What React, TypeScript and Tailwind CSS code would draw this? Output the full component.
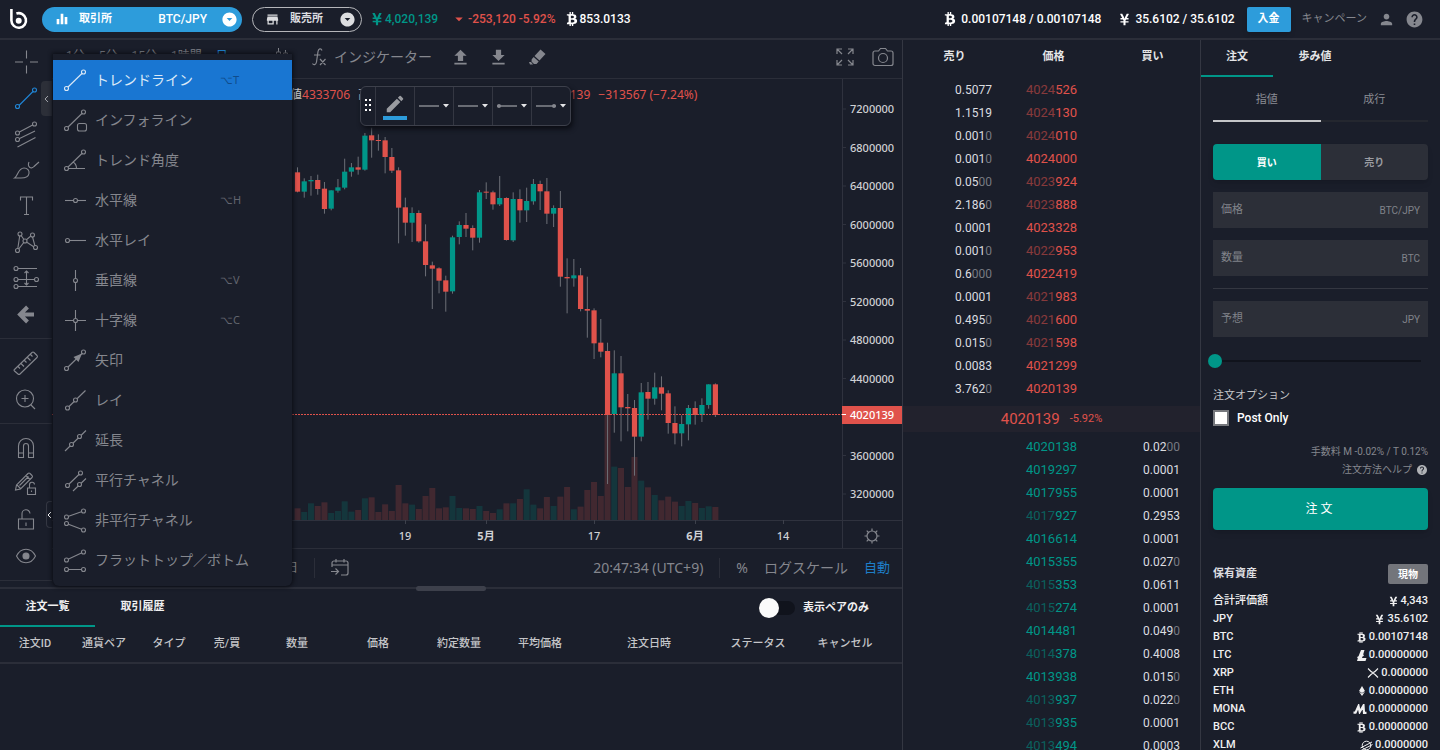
import React, { useState } from "react";
import {
  MdArrowDropDown,
  MdArrowDropDownCircle,
  MdDownload,
  MdEdit,
  MdEqualizer,
  MdHelp,
  MdPerson,
  MdStore,
  MdUpload,
} from "react-icons/md";
import { FaBtc, FaEthereum, FaYenSign } from "react-icons/fa";

type Pt = [number, number];

// line drawing icon, dots are the little handles on the line ends
function LineIcon({ d, dots = [], fill, children }: { d: string; dots?: Pt[]; fill?: string; children?: React.ReactNode }) {
  return (
    <svg width="28" height="28" viewBox="0 0 28 28" fill="none" stroke="currentColor" strokeWidth="1.1" className="shrink-0">
      <path d={d} />
      {fill && <path d={fill} fill="currentColor" stroke="none" />}
      {dots.map(([x, y], i) => (
        <circle key={i} cx={x} cy={y} r="2" className="fill-[#1a1e2a] group-first:fill-[#1976d2]" />
      ))}
      {children}
    </svg>
  );
}

const tools = [
  [
    { name: "十字カーソル", icon: <LineIcon d="M14.5 2.5v8M14.5 17.500v8M3 14h8M18 14h8" /> },
    {
      name: "トレンドライン",
      active: true,
      icon: <LineIcon d="M7 21.500L21 7.500"><circle cx="5.500" cy="22.500" r="2" /><circle cx="22.500" cy="6" r="2" /></LineIcon>,
    },
    { name: "フィボナッチ", icon: <LineIcon d="M5.500 13L22.500 4M5.500 19.500L23 11M5.500 27L23.500 17.500" dots={[[5.5, 13], [22.5, 4], [5.5, 19.5]]} /> },
    { name: "ブラシ", icon: <LineIcon d="M2.700 22C6 20 6 12 12 12c3.500 0 5.500 2.500 5 5.500C16.500 21 13 22 9 22zM17 6c-2 4.500 2 8 5 4.500L27 6" /> },
    { name: "テキスト", icon: <LineIcon d="M8.500 8.500V5h12v3.500M14.500 5v17M12 22.500h5" /> },
    { name: "パターン", icon: <LineIcon d="M5.500 22.500L8 6l5 7 7-6 3.500 13L13 13z" dots={[[8, 6], [20.5, 7], [5.5, 22.5], [23.5, 19.5], [13, 13]]} /> },
    { name: "ポジション", icon: <LineIcon d="M4 4.500h21M4 15.500h20M4 22.500h21M14.500 7v14M12.500 9l2-2 2 2M12.500 19l2 2 2-2" dots={[[4, 4.5], [4, 15.5], [24.5, 15.5], [4, 22.5]]} /> },
    { name: "戻る", icon: <svg width="28" height="28" viewBox="0 0 28 28" fill="none" stroke="currentColor" strokeWidth="4"><path d="M22 14.500H9M15.500 7l-7.500 7.500 7.500 7.500" /></svg> },
  ],
  [
    { name: "定規", icon: <LineIcon d="M2.500 20.500L20 3.500q1-1 2 0l3 3q1 1 0 2L8 25q-1 1-2 0l-3.500-3q-1-.8 0-1.500zM6 17.500l2 2M9 14.500l3 3M12.500 11.500l2 2M15.500 8.500l3 3M18.500 5.500l2 2" /> },
    { name: "拡大", icon: <LineIcon d="M19 20l4 4M9.500 13.500h7M13 10v7"><circle cx="13" cy="13.500" r="8.500" /></LineIcon> },
  ],
  [
    { name: "マグネット", icon: <LineIcon d="M6.500 23.500V12a7.500 7.500 0 0 1 15 0v11.500h-5V12a2.500 2.500 0 0 0-5 0v11.500zM6.500 19h5M16.500 19h5" /> },
    { name: "描画ロック", icon: <LineIcon d="M3.500 20l1-5L16 3.500q1-1 2 0l2 2q1 1 0 2L8.500 19zM14 5.500l4 4M5 15l3.500 3.500M7.500 15.500l9-9M15.500 18h8v6.500h-8zM17.500 18v-3a2.500 2.500 0 0 1 5-.5M19.500 20.500v1.500" /> },
    { name: "ロック", icon: <LineIcon d="M6.500 13h15v10h-15zM10 13V8a4 4 0 0 1 8-.5M14 16.500v3.500" /> },
    { name: "表示", icon: <LineIcon d="M4.500 14C9 5 19 5 23.500 14 19 23 9 23 4.500 14z"><circle cx="14" cy="14" r="3" fill="currentColor" /></LineIcon> },
  ],
];

const lineTools = [
  { name: "トレンドライン", key: "⌥T", icon: <LineIcon d="M5.500 22.500L22.500 6" dots={[[5.5, 22.5], [22.5, 6]]} /> },
  { name: "インフォライン", key: "", icon: <LineIcon d="M5.500 22.500L22.500 6" dots={[[5.5, 22.5], [22.5, 6]]}><rect x="16.500" y="17.500" width="9" height="7.500" rx="2" className="fill-[#1a1e2a]" /></LineIcon> },
  { name: "トレンド角度", key: "", icon: <LineIcon d="M24 22.500H5.500L22.500 6M12 16q3.500 2 3.500 6.500" dots={[[5.5, 22.5], [22.5, 6]]} /> },
  { name: "水平線", key: "⌥H", icon: <LineIcon d="M4 14.500h21" dots={[[14.5, 14.5]]} /> },
  { name: "水平レイ", key: "", icon: <LineIcon d="M6 14.500h19" dots={[[6.5, 14.5]]} /> },
  { name: "垂直線", key: "⌥V", icon: <LineIcon d="M14.500 4v21" dots={[[14.5, 14.5]]} /> },
  { name: "十字線", key: "⌥C", icon: <LineIcon d="M4 14.500h21M14.500 4v21" dots={[[14.5, 14.5]]} /> },
  { name: "矢印", key: "", icon: <LineIcon d="M5.500 22.500L22.500 6" fill="M21 7.500l-8.500 3.500 5 5z" dots={[[5.5, 22.5], [22.5, 6]]} /> },
  { name: "レイ", key: "", icon: <LineIcon d="M6.500 22L24.500 4.500" dots={[[6.5, 22], [14.5, 14]]} /> },
  { name: "延長", key: "", icon: <LineIcon d="M4 25L25 4.500" dots={[[10.5, 18.5], [18.5, 10.5]]} /> },
  { name: "平行チャネル", key: "", icon: <LineIcon d="M6.500 19.500L19.500 7M12 25L25 12.500" dots={[[6.5, 19.5], [19.5, 7], [18.5, 18.5]]} /> },
  { name: "非平行チャネル", key: "", icon: <LineIcon d="M5.500 11L22.500 5M5.500 17.500L22.500 24" dots={[[5.5, 11], [22.5, 5], [5.5, 17.5], [22.5, 24]]} /> },
  { name: "フラットトップ／ボトム", key: "", icon: <LineIcon d="M5.500 14L22.500 6M5.500 23.500h17" dots={[[5.5, 14], [22.5, 6], [5.5, 23.5], [22.5, 23.5]]} /> },
];

// high, body top, body bottom, low, up, volume (3 units per px, y from 80)
const candles = [
  [262, 277, 335, 337, 0, 35], [295, 304, 335, 353, 1, 24], [288, 300, 304, 347, 1, 50], [284, 300, 327, 344, 0, 42],
  [306, 326, 387, 401, 0, 53], [331, 331, 386, 391, 1, 21], [297, 322, 332, 338, 1, 27], [236, 275, 323, 328, 1, 56],
  [249, 262, 275, 290, 1, 25], [230, 262, 269, 284, 0, 30], [159, 167, 269, 272, 1, 65], [143, 166, 181, 233, 0, 68],
  [163, 180, 183, 212, 0, 24], [171, 181, 231, 280, 0, 47], [204, 231, 272, 279, 0, 27], [262, 271, 383, 490, 0, 105],
  [353, 382, 428, 467, 0, 50], [382, 399, 428, 486, 1, 46], [391, 399, 484, 488, 0, 33], [433, 484, 555, 589, 0, 72],
  [545, 556, 566, 687, 0, 96], [562, 565, 602, 640, 0, 35], [587, 601, 635, 695, 0, 38], [467, 472, 634, 641, 1, 72],
  [424, 435, 471, 493, 1, 36], [399, 435, 446, 471, 0, 35], [436, 444, 473, 511, 0, 33], [330, 337, 473, 488, 1, 42],
  [307, 335, 338, 357, 0, 27], [332, 337, 373, 389, 0, 21], [288, 354, 373, 378, 1, 32], [352, 354, 480, 482, 0, 50],
  [337, 357, 481, 486, 1, 50], [328, 357, 391, 428, 0, 63], [323, 363, 391, 426, 1, 92], [297, 312, 364, 374, 1, 46],
  [302, 312, 334, 390, 0, 35], [294, 334, 401, 432, 0, 69], [376, 384, 401, 441, 1, 42], [333, 384, 590, 620, 0, 70],
  [535, 591, 595, 700, 0, 99], [537, 586, 595, 620, 1, 32], [564, 586, 687, 694, 0, 40], [590, 687, 692, 773, 0, 90],
  [685, 691, 790, 837, 0, 114], [717, 788, 815, 832, 0, 72], [788, 813, 1005, 1212, 0, 315], [811, 880, 1002, 1058, 1, 160],
  [828, 880, 982, 1084, 0, 156], [942, 981, 985, 1054, 0, 99], [960, 984, 1070, 1187, 0, 189], [909, 937, 1070, 1084, 1, 118],
  [906, 936, 956, 1019, 0, 98], [878, 922, 956, 974, 1, 75], [889, 922, 941, 991, 0, 59], [931, 940, 1029, 1061, 0, 70],
  [979, 1029, 1060, 1093, 0, 55], [1006, 1032, 1060, 1099, 1, 42], [975, 984, 1033, 1081, 1, 57], [964, 984, 1005, 1034, 0, 51],
  [955, 975, 1005, 1026, 1, 36], [913, 913, 975, 986, 1, 41], [910, 913, 1005, 1011, 0, 39],
];
const prices = [7200000, 6800000, 6400000, 6000000, 5600000, 5200000, 4800000, 4400000, 4000000, 3600000, 3200000];
const dates: [number, string][] = [[353, "19"], [434, "5月"], [542, "17"], [643, "6月"], [731, "14"]];

function Chart() {
  return (
    <svg viewBox="0 0 850 469" preserveAspectRatio="xMaxYMin slice" className="h-full w-full font-['Noto_Sans','Noto_Sans_CJK_JP',sans-serif]">
      <g stroke="#2f323e">
        <path d="M790.5 0V469M0 441.500H850" />
      </g>
      {candles.map(([hi, top, bot, lo, up, vol], i) => {
        const x = 245.5 + i * 6.74;
        const color = up ? "#009688" : "#e0524b";
        return (
          <g key={i}>
            <rect x={x - 3} y={441 - vol / 3} width="6" height={vol / 3} fill={color} opacity="0.2" />
            <rect x={x - 0.5} y={1 + hi / 3} width="1" height={(lo - hi) / 3} fill="#6c6f77" />
            <rect x={x - 2.6} y={1 + top / 3} width="5.200" height={(bot - top) / 3} fill={color} />
          </g>
        );
      })}
      <path d="M0 335.500H790" stroke="#e0524b" strokeDasharray="2 1" />
      <g fill="#d0d1d4" fontSize="11" fontWeight="500">
        {prices.map((p, i) => (
          <g key={p}>
            <path d={`M790 ${30 + i * 38.5}h4`} stroke="#2f323e" />
            {p !== 4000000 && <text x="798" y={34 + i * 38.5}>{p}</text>}
          </g>
        ))}
        {dates.map(([x, label]) => (
          <g key={label}>
            <path d={`M${x}.500 441v4`} stroke="#3d404b" />
            <text x={x} y="461" textAnchor="middle" fontWeight={label.includes("月") ? 700 : 500}>{label}</text>
          </g>
        ))}
      </g>
      <rect x="790" y="327" width="60" height="18" fill="#e0524b" />
      <path d="M790 335.500h4" stroke="#fff" />
      <text x="798" y="340" fontSize="11" fontWeight="500" fill="#fff">4020139</text>
    </svg>
  );
}

const asks = [
  ["0.5077", "4024526"], ["1.1519", "4024130"], ["0.0010", "4024010"], ["0.0010", "4024000"], ["0.0500", "4023924"],
  ["2.1860", "4023888"], ["0.0001", "4023328"], ["0.0010", "4022953"], ["0.6000", "4022419"], ["0.0001", "4021983"],
  ["0.4950", "4021600"], ["0.0150", "4021598"], ["0.0083", "4021299"], ["3.7620", "4020139"],
];
const bids = [
  ["0.0200", "4020138"], ["0.0001", "4019297"], ["0.0001", "4017955"], ["0.2953", "4017927"], ["0.0001", "4016614"],
  ["0.0270", "4015355"], ["0.0611", "4015353"], ["0.0001", "4015274"], ["0.0490", "4014481"], ["0.4008", "4014378"],
  ["0.0150", "4013938"], ["0.0220", "4013937"], ["0.0001", "4013935"], ["0.0003", "4013494"],
];

function Amount({ value }: { value: string }) {
  const head = value.replace(/0+$/, "");
  return <>{head}<span className="text-[#777a82]">{value.slice(head.length)}</span></>;
}

// thousands repeated from the neighbouring row are dimmed
function Price({ value, near }: { value: string; near?: string }) {
  const n = near && near.slice(0, 4) === value.slice(0, 4) ? 4 : 0;
  return <><span className="opacity-55">{value.slice(0, n)}</span>{value.slice(n)}</>;
}

function OrderBook() {
  return (
    <section className="w-[298px] shrink-0 overflow-hidden border-r border-[#343742]">
      <table className="w-full table-fixed text-xs">
        <thead>
          <tr className="h-[38px] align-top text-[11px] leading-[34px] text-[#e4e5e7]">
            <th className="p-0 pl-1 font-bold">売り</th>
            <th className="p-0 pl-1 font-bold">価格</th>
            <th className="p-0 pl-1 font-bold">買い</th>
          </tr>
        </thead>
        <tbody>
          {asks.map(([amount, price], i) => (
            <tr key={price} className="h-[23px]">
              <td className="p-0 pr-[10px] text-right text-[#dcdde0]"><Amount value={amount} /></td>
              <td className="p-0 text-center text-[13px] text-[#e0524b]"><Price value={price} near={asks[i + 1]?.[1]} /></td>
              <td />
            </tr>
          ))}
        </tbody>
      </table>
      <div className="mt-[6px] mb-[3px] flex h-[26px] items-center justify-center gap-[10px] bg-[#22222d] text-[15px] text-[#e0524b]">
        4020139 <span className="text-[11px]">-5.92%</span>
      </div>
      <table className="w-full table-fixed text-xs">
        <tbody>
          {bids.map(([amount, price], i) => (
            <tr key={price} className="h-[23px]">
              <td />
              <td className="p-0 text-center text-[13px] text-[#009688]"><Price value={price} near={bids[i - 1]?.[1]} /></td>
              <td className="p-0 pr-5 text-right text-[#dcdde0]"><Amount value={amount} /></td>
            </tr>
          ))}
        </tbody>
      </table>
    </section>
  );
}

function Field({ label, unit }: { label: string; unit: string }) {
  return (
    <label className="flex h-9 items-center bg-[#2c2f38] px-2 text-[11px] text-[#80838a]">
      <span className="shrink-0">{label}</span>
      <input type="text" className="h-full min-w-0 flex-1 bg-transparent px-2 text-right outline-none" />
      <span className="text-[10px]">{unit}</span>
    </label>
  );
}

const balances = [
  { name: "合計評価額", icon: <FaYenSign size={11} />, value: "4,343" },
  { name: "JPY", icon: <FaYenSign size={11} />, value: "35.6102" },
  { name: "BTC", icon: <FaBtc size={11} />, value: "0.00107148" },
  { name: "LTC", icon: <svg width="10" height="11" viewBox="0 0 10 11" fill="currentColor"><path d="M4 0h3.500L6 5l1-.4-.4 1.500-1.100.5L5 8h4.500L8.500 11H0l1-3.200-1 .4.500-1.500 1-.5z" /></svg>, value: "0.00000000" },
  { name: "XRP", icon: <svg width="12" height="10" viewBox="0 0 12 10" fill="none" stroke="currentColor" strokeWidth="1.100"><path d="M1 .5l3 3q2 2 4 0l3-3M1 9.500l3-3q2-2 4 0l3 3" /></svg>, value: "0.000000" },
  { name: "ETH", icon: <FaEthereum size={10} />, value: "0.00000000" },
  { name: "MONA", icon: <svg width="14" height="10" viewBox="0 0 14 10" fill="none" stroke="currentColor" strokeWidth="2.200"><path d="M.5 8.700h2L5.500 2l1.200 6L10.500 1.500 11 8.800h2.500" /></svg>, value: "0.00000000" },
  { name: "BCC", icon: <FaBtc size={11} />, value: "0.00000000" },
  { name: "XLM", icon: <svg width="13" height="11" viewBox="0 0 13 11" fill="none" stroke="currentColor"><circle cx="6.500" cy="5.500" r="4.300" /><path d="M.5 8L12 2M1 10.500L12.500 4.500" /></svg>, value: "0.0000000" },
];

function OrderPanel() {
  const [side, setSide] = useState("buy");
  return (
    <aside className="w-[239px] shrink-0 overflow-hidden">
      <div className="flex h-[37px] text-[11px] font-bold text-[#e4e5e7]">
        <button className="w-[72px] border-b-2 border-[#009688]">注文</button>
        <button className="w-[84px] border-b-2 border-transparent">歩み値</button>
      </div>
      <div className="px-3">
        <div className="flex h-[45px] text-[11px] text-[#8a8c93]">
          <button className="flex-1 border-b-2 border-[#c4c5c8] pt-1">指値</button>
          <button className="flex-1 border-b-2 border-[#24272f] pt-1">成行</button>
        </div>
        <div className="mt-[22px] flex h-9 overflow-hidden rounded-sm text-[10px] font-bold shadow-md">
          <button onClick={() => setSide("buy")} className={side === "buy" ? "flex-1 bg-[#009688] text-white" : "flex-1 bg-[#2c2f38] text-[#9a9ca1]"}>買い</button>
          <button onClick={() => setSide("sell")} className={side === "sell" ? "flex-1 bg-[#e0524b] text-white" : "flex-1 bg-[#2c2f38] text-[#9a9ca1]"}>売り</button>
        </div>
        <div className="mt-3 flex flex-col gap-3">
          <Field label="価格" unit="BTC/JPY" />
          <Field label="数量" unit="BTC" />
          <hr className="border-[#343741]" />
          <Field label="予想" unit="JPY" />
        </div>
        <input
          type="range"
          aria-label="数量の割合"
          defaultValue={0}
          className="mt-[17px] -ml-[5px] block h-[14px] w-[213px] appearance-none bg-transparent [&::-webkit-slider-runnable-track]:h-[2px] [&::-webkit-slider-runnable-track]:bg-[#10131c] [&::-webkit-slider-thumb]:-mt-[6px] [&::-webkit-slider-thumb]:h-[14px] [&::-webkit-slider-thumb]:w-[14px] [&::-webkit-slider-thumb]:appearance-none [&::-webkit-slider-thumb]:rounded-full [&::-webkit-slider-thumb]:bg-[#009688]"
        />
        <p className="mt-5 text-[11px] leading-4 text-[#c4c5c8]">注文オプション</p>
        <label className="mt-[6px] flex h-4 items-center gap-2 text-xs font-medium text-white">
          <input type="checkbox" className="h-4 w-4 appearance-none border-2 border-[#76787d] bg-white checked:bg-[#009688]" />
          Post Only
        </label>
        <div className="mt-[17px] text-right text-[10px] leading-[18px] text-[#85878e]">
          <p>手数料 M -0.02% / T 0.12%</p>
          <a href="#help" className="flex items-center justify-end gap-1">注文方法ヘルプ <MdHelp size={12} className="text-[#b0b2b6]" /></a>
        </div>
        <button className="mt-[9px] h-[42px] w-full rounded-sm bg-[#009688] text-xs tracking-[3px] text-white shadow-md">注文</button>
        <div className="mt-[34px] flex h-5 items-center justify-between text-[11px] font-bold text-[#dcdde0]">
          保有資産
          <button className="h-5 w-10 rounded-xs bg-[#73757b] text-[10px] text-white">現物</button>
        </div>
        <dl className="mt-2 text-[11px] font-medium leading-[18px] text-[#f0f0f1]">
          {balances.map((b) => (
            <div key={b.name} className="flex justify-between">
              <dt>{b.name}</dt>
              <dd className="flex items-center gap-[2px]">{b.icon}{b.value}</dd>
            </div>
          ))}
        </dl>
      </div>
    </aside>
  );
}

function TopBar() {
  return (
    <header className="flex h-10 shrink-0 items-center justify-between border-b-2 border-[#2b2e39] pr-4 pl-[10px] text-xs font-medium text-white">
      <div className="flex items-center">
        <svg width="18" height="22" viewBox="0 0 18 22" fill="none" stroke="#fff" strokeWidth="2.600">
          <path d="M1.400 1v11.500a7.300 7.300 0 1 0 5-7" />
          <circle cx="8.700" cy="12.700" r="3" fill="#fff" stroke="none" />
        </svg>
        <button className="ml-[14px] flex h-[25px] w-[200px] items-center rounded-full bg-[#2d9cdb] px-3 pr-1">
          <MdEqualizer size={16} />
          <span className="ml-[9px] text-[11px] font-bold">取引所</span>
          <span className="ml-auto">BTC/JPY</span>
          <MdArrowDropDownCircle size={17} className="ml-[14px]" />
        </button>
        <button className="ml-[10px] flex h-[25px] w-[110px] items-center rounded-full border border-[#b5b6ba] px-3 pr-[5px] text-[#dcdde0]">
          <MdStore size={15} />
          <span className="ml-[10px] text-[11px] font-bold">販売所</span>
          <MdArrowDropDownCircle size={17} className="ml-auto" />
        </button>
        <span className="ml-[8px] flex items-center gap-px text-[#009688]"><FaYenSign size={14} />4,020,139</span>
        <span className="ml-[12px] flex items-center text-[#e0524b]"><MdArrowDropDown size={18} />-253,120 -5.92%</span>
        <span className="ml-[10px] flex items-center"><FaBtc size={14} />853.0133</span>
      </div>
      <div className="flex items-center">
        <span className="flex items-center gap-1"><FaBtc size={14} />0.00107148 / 0.00107148</span>
        <span className="ml-[17px] flex items-center gap-1"><FaYenSign size={13} />35.6102 / 35.6102</span>
        <button className="ml-[12px] h-[25px] w-11 rounded-xs bg-[#2d9cdb] text-[11px] font-bold shadow-md">入金</button>
        <a href="#campaign" className="ml-[11px] text-[11px] font-normal text-[#85878e]">キャンペーン</a>
        <MdPerson size={17} className="ml-[11px] text-[#85878e]" />
        <MdHelp size={19} className="ml-[10px] text-[#85878e]" />
      </div>
    </header>
  );
}

function Toolbar() {
  return (
    <div className="flex h-[39px] items-center border-b border-[#2b2e39] pr-2 pb-1 text-sm text-[#85878e]">
      <div className="flex w-[212px] shrink-0 items-center gap-[14px] pl-[14px] text-[12px]">
        <button>1分</button>
        <button>5分</button>
        <button>15分</button>
        <button>1時間</button>
        <button className="text-[#1e88d8]">日</button>
      </div>
      <button aria-label="チャートタイプ" className="ml-[10px]">
        <svg width="16" height="20" viewBox="0 0 16 20" fill="none" stroke="currentColor">
          <path d="M4.500 1v4M4.500 15v4M11.500 3v3M11.500 14v4M2.500 5h4v10h-4zM9.500 6h4v8h-4z" />
        </svg>
      </button>
      <button className="ml-[22px] flex items-center gap-2">
        <svg width="14" height="20" viewBox="0 0 14 20" fill="none" stroke="currentColor" strokeWidth="1.200">
          <path d="M10 3.500C9 1 6.500 1.500 6 4.500L4.500 15C4 18 1.500 18.500.5 16.500M2 8h6.500M8 12l5.500 6M13.500 12L8 18" />
        </svg>
        インジケーター
      </button>
      <button aria-label="保存" className="ml-[18px]"><MdUpload size={21} /></button>
      <button aria-label="読込" className="ml-[17px]"><MdDownload size={21} /></button>
      <button aria-label="消去" className="ml-5">
        <svg width="18" height="18" viewBox="0 0 18 18" fill="currentColor">
          <path d="M11.500 1.500l5 4.500-6 6.500-5-4.500zM4.700 9l5 4.500-2.200 2.500H5L2.500 13.500l.2-2.200z" />
          <path d="M0 14h2l2 2.500H1z" />
        </svg>
      </button>
      <button aria-label="全画面" className="ml-auto">
        <svg width="18" height="18" viewBox="0 0 18 18" fill="none" stroke="currentColor" strokeWidth="1.200">
          <path d="M1 6V1h5M1 1l5 5M12 1h5v5M17 1l-5 5M1 12v5h5M1 17l5-5M17 12v5h-5M17 17l-5-5" />
        </svg>
      </button>
      <button aria-label="スナップショット" className="ml-[18px]">
        <svg width="22" height="20" viewBox="0 0 22 20" fill="none" stroke="currentColor" strokeWidth="1.200">
          <path d="M3 4h3.500l2-2.500h5l2 2.500H19a2 2 0 0 1 2 2v10.500a2 2 0 0 1-2 2H3a2 2 0 0 1-2-2V6a2 2 0 0 1 2-2z" />
          <circle cx="11" cy="11" r="4.500" />
        </svg>
      </button>
    </div>
  );
}

function DrawBar() {
  return (
    <div className="absolute top-[7px] left-[308px] flex h-10 rounded-md border border-[#3d404b] bg-[#1a1e2a] shadow-[2px_3px_5px_#0b0d14]">
      <span className="flex w-[14px] items-center justify-center">
        <svg width="6" height="14" viewBox="0 0 6 14" fill="#fff">
          <path d="M0 0h2v2H0zM4 0h2v2H4zM0 5h2v2H0zM4 5h2v2H4zM0 10h2v2H0zM4 10h2v2H4z" />
        </svg>
      </span>
      <button aria-label="線の色" className="flex w-[39px] flex-col items-center justify-center border-l border-[#343742] text-[#9a9ca1]">
        <MdEdit size={22} />
        <span className="mt-px h-[4px] w-6 bg-[#2d9cdb]" />
      </button>
      {["", "", "M0 4a2 2 0 1 0 4 0 2 2 0 1 0-4 0", "M16 4a2 2 0 1 0 4 0 2 2 0 1 0-4 0"].map((dot, i) => (
        <button key={i} aria-label="線のスタイル" className="flex w-[39px] items-center gap-1 border-l border-[#343742] pl-1 text-[#85878e]">
          <svg width="20" height="8" viewBox="0 0 20 8"><path d="M0 4h20" stroke="currentColor" strokeWidth="1.500" /><path d={dot} fill="currentColor" /></svg>
          <svg width="6" height="4" viewBox="0 0 6 4"><path d="M0 0h6L3 3.500z" fill="#e4e5e7" /></svg>
        </button>
      ))}
    </div>
  );
}

const legend = [["始値", "4333706"], ["高値", "4336910"], ["安値", "4002000"], ["終値", "4020139"]];
const columns: [string, string][] = [
  ["注文ID", "w-[70px]"], ["通貨ペア", "w-[68px]"], ["タイプ", "w-[62px]"], ["売/買", "w-[54px]"], ["数量", "w-[86px]"], ["価格", "w-[76px]"],
  ["約定数量", "w-[86px]"], ["平均価格", "w-[76px]"], ["注文日時", "w-[142px]"], ["ステータス", "w-[76px]"], ["キャンセル", "pr-2"],
];

export default function App() {
  return (
    <div className="flex h-screen flex-col overflow-hidden bg-[#1a1e2a] font-['Roboto','Noto_Sans_CJK_JP',sans-serif]">
      <TopBar />
      <div className="flex min-h-0 flex-1">
        <main className="flex min-w-0 flex-1 flex-col border-r border-[#343742]">
          <div className="relative flex h-[549px] shrink-0 border-b-2 border-[#2b2e39]">
            <nav className="relative flex w-[52px] shrink-0 flex-col pt-1 text-[#85878e]">
              {tools.map((group, g) => (
                <div key={g} className="mb-[6px] border-b border-[#2b2e39] pb-[6px]">
                  {group.map((t) => (
                    <button key={t.name} aria-label={t.name} className={"active" in t ? "flex h-9 w-full items-center justify-center text-[#2187d8]" : "flex h-9 w-full items-center justify-center"}>
                      {t.icon}
                    </button>
                  ))}
                </div>
              ))}
              <button aria-label="ツールを閉じる" className="absolute top-[41px] right-0 flex h-[35px] w-[11px] items-center justify-center rounded-l-sm bg-[#2c2f38] text-[#a0a2a8]">
                <svg width="5" height="8" viewBox="0 0 5 8" fill="none" stroke="currentColor"><path d="M4 1L1 4l3 3" /></svg>
              </button>
              <button aria-label="パネルを開く" className="absolute top-[461px] right-0 flex h-[27px] w-[6px] items-center rounded-l-sm border border-r-0 border-[#343742] text-white">
                <svg width="5" height="8" viewBox="0 0 5 8" fill="none" stroke="currentColor"><path d="M4 1L1 4l3 3" /></svg>
              </button>
            </nav>
            <div className="flex min-w-0 flex-1 flex-col">
              <Toolbar />
              <div className="relative h-[469px] shrink-0">
                <Chart />
                <div className="absolute top-[7px] left-[226px] flex gap-2 font-['Noto_Sans','Noto_Sans_CJK_JP',sans-serif] text-xs leading-[18px] text-[#e0524b]">
                  {legend.map(([k, v]) => (
                    <span key={k}><span className="text-[#c4c5c8]">{k}</span>{v}</span>
                  ))}
                  <span>−313567 (−7.24%)</span>
                </div>
                <DrawBar />
                <button aria-label="チャート設定" className="absolute right-[22px] bottom-1 text-[#85878e]">
                  <svg width="16" height="16" viewBox="0 0 16 16" fill="none" stroke="currentColor" strokeWidth="1.200">
                    <circle cx="8" cy="8" r="5" />
                    <path d="M8 3V.5M8 13v2.500M3 8H.5M13 8h2.500M4.500 4.500L2.700 2.700M11.500 4.500l1.800-1.800M4.500 11.500l-1.800 1.800M11.500 11.500l1.800 1.800" />
                  </svg>
                </button>
              </div>
              <div className="flex flex-1 items-center border-t border-[#2b2e39] pr-3 pl-[234px] font-['Noto_Sans','Noto_Sans_CJK_JP',sans-serif] text-[13px] text-[#85878e]">
                <span className="text-xs">日</span>
                <span className="ml-4 h-5 w-px bg-[#2b2e39]" />
                <button aria-label="日付へ移動" className="ml-4">
                  <svg width="18" height="18" viewBox="0 0 18 18" fill="none" stroke="currentColor" strokeWidth="1.200">
                    <path d="M1 8V4a2 2 0 0 1 2-2h12a2 2 0 0 1 2 2v10a2 2 0 0 1-2 2h-5M1 6h16M5 0v3.500M13 0v3.500M0 12.500h7M4.500 9.500l3 3-3 3" />
                  </svg>
                </button>
                <span className="ml-auto text-sm">20:47:34 (UTC+9)</span>
                <span className="ml-4 h-5 w-px bg-[#2b2e39]" />
                <button className="ml-4 text-sm">%</button>
                <button className="ml-4 text-sm">ログスケール</button>
                <button className="ml-4 text-[#1e7fc9]">自動</button>
              </div>
            </div>
            <ul className="absolute top-[14px] left-[53px] z-10 w-[239px] rounded-b-md bg-[#1a1e2a] py-[6px] font-['Noto_Sans','Noto_Sans_CJK_JP',sans-serif] text-sm text-[#85878e] shadow-[0_0_4px_1px_#0b0d14]">
              {lineTools.map((t) => (
                <li key={t.name} className="group first:bg-[#1976d2] first:text-[#dbe9f7]">
                  <button className="flex h-10 w-full items-center pl-2 text-left">
                    {t.icon}
                    <span className="ml-[6px] min-w-[125px] pb-[2px] font-['Noto_Sans_CJK_JP',sans-serif] whitespace-nowrap">{t.name}</span>
                    {t.key && <span className="text-[11px] text-[#62656e] group-first:text-[#0f4c8c]">{t.key}</span>}
                  </button>
                </li>
              ))}
            </ul>
            <span className="absolute -bottom-1 left-1/2 h-[5px] w-[70px] -translate-x-1/2 rounded-full bg-[#3d404b]" />
          </div>
          <div className="flex h-[38px] shrink-0 items-stretch text-[11px] font-bold text-[#f0f0f1]">
            <button className="w-[95px] border-b-2 border-[#009688]">注文一覧</button>
            <button className="w-[95px] border-b-2 border-transparent">取引履歴</button>
            <label className="mr-[33px] ml-auto flex items-center gap-2">
              <input type="checkbox" className="relative h-[14px] w-9 appearance-none rounded-full bg-[#10131c] before:absolute before:-top-[3px] before:left-0 before:h-5 before:w-5 before:rounded-full before:bg-[#fafafa] checked:before:left-4" />
              表示ペアのみ
            </label>
          </div>
          <table className="w-full table-fixed border-b-2 border-[#2b2e39] text-[11px] text-[#c4c5c8]">
            <thead>
              <tr className="h-[36px]">
                {columns.map(([name, w]) => (
                  <th key={name} className={`p-0 font-medium whitespace-nowrap ${w}`}>{name}</th>
                ))}
              </tr>
            </thead>
          </table>
        </main>
        <OrderBook />
        <OrderPanel />
      </div>
    </div>
  );
}
